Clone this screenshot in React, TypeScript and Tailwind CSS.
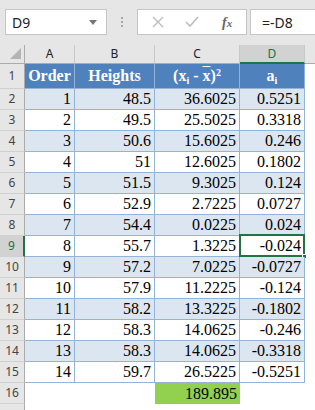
import React from 'react';

const rows: [string, string, string, string][] = [
  ['1', '48.5', '36.6025', '0.5251'],
  ['2', '49.5', '25.5025', '0.3318'],
  ['3', '50.6', '15.6025', '0.246'],
  ['4', '51', '12.6025', '0.1802'],
  ['5', '51.5', '9.3025', '0.124'],
  ['6', '52.9', '2.7225', '0.0727'],
  ['7', '54.4', '0.0225', '0.024'],
  ['8', '55.7', '1.3225', '-0.024'],
  ['9', '57.2', '7.0225', '-0.0727'],
  ['10', '57.9', '11.2225', '-0.124'],
  ['11', '58.2', '13.3225', '-0.1802'],
  ['12', '58.3', '14.0625', '-0.246'],
  ['13', '58.3', '14.0625', '-0.3318'],
  ['14', '59.7', '26.5225', '-0.5251'],
];

const sans = "font-['Noto_Sans',sans-serif]";
const serif = "font-['Liberation_Serif',serif]";

const RowHead = ({ n, active }: { n?: number; active?: boolean }) => (
  <div
    className={`flex items-center justify-center text-[12px] border-b border-[#d0d0d0] ${sans} ${
      active
        ? 'bg-[#d2d2d2] text-[#217346] border-r-2 border-r-[#217346]'
        : 'bg-[#e6e6e6] text-[#444] border-r border-r-[#ababab]'
    }`}
  >
    {n}
  </div>
);

const App: React.FC = () => {
  return (
    <div className="w-[315px] h-[410px] overflow-hidden bg-[#e6e6e6] flex flex-col">
      {/* formula bar */}
      <div className="h-[45px] shrink-0 flex items-start pt-[9px] pl-[5px]">
        <div className={`w-[102px] h-[26px] bg-white border border-[#c6c6c6] flex items-center justify-between pl-[6px] pr-[9px] text-[14px] text-[#222] ${sans}`}>
          <span>D9</span>
          <svg width="8" height="5" viewBox="0 0 8 5">
            <path d="M0 0h8L4 5z" fill="#777" />
          </svg>
        </div>
        <div className="w-[30px] h-[26px] flex flex-col items-center justify-center gap-[2px]">
          <span className="w-[2px] h-[2px] bg-[#a6a6a6]" />
          <span className="w-[2px] h-[2px] bg-[#a6a6a6]" />
          <span className="w-[2px] h-[2px] bg-[#a6a6a6]" />
        </div>
        <div className="w-[110px] h-[26px] bg-white border border-[#c6c6c6] flex items-center">
          <svg className="ml-[14px]" width="12" height="12" viewBox="0 0 12 12">
            <path d="M1 1l10 10M11 1L1 11" stroke="#bdbdbd" strokeWidth="1.4" />
          </svg>
          <svg className="ml-[21px]" width="14" height="12" viewBox="0 0 14 12">
            <path d="M1 6l4 4 8-9" stroke="#bdbdbd" strokeWidth="1.6" fill="none" />
          </svg>
          <span className={`ml-[23px] text-[14px] italic font-bold text-[#666] ${serif}`}>
            f<span className="text-[11px]">x</span>
          </span>
        </div>
        <div className={`ml-[3px] flex-1 h-[26px] bg-white border border-[#c6c6c6] border-r-0 flex items-center pl-[11px] text-[14px] text-[#222] ${sans}`}>
          =-D8
        </div>
      </div>

      {/* grid */}
      <div className="grid grid-cols-[25px_50px_80px_85px_65px_1fr] grid-rows-[19px_25px_repeat(16,21px)] bg-white">
        {/* column headers */}
        <div className="relative bg-[#e6e6e6] border-r border-b border-[#ababab]">
          <svg className="absolute right-[3px] bottom-[4px]" width="11" height="11" viewBox="0 0 11 11">
            <path d="M11 0V11H0z" fill="#b4b4b4" />
          </svg>
        </div>
        {['A', 'B', 'C'].map((c) => (
          <div
            key={c}
            className={`bg-[#e6e6e6] border-r border-r-[#c8c8c8] border-b border-b-[#ababab] flex items-center justify-center text-[12px] text-[#222] ${sans}`}
          >
            {c}
          </div>
        ))}
        <div className={`bg-[#d2d2d2] border-r border-r-[#c8c8c8] border-b-2 border-b-[#217346] flex items-center justify-center text-[12px] text-[#217346] ${sans}`}>
          D
        </div>
        <div className="bg-[#e6e6e6] border-b border-b-[#ababab]" />

        {/* row 1 header */}
        <RowHead n={1} />
        {['Order', 'Heights'].map((h) => (
          <div
            key={h}
            className={`bg-[#4f81bd] border-r border-b border-[#95b3d7] flex items-center justify-center text-white font-bold text-[16px] ${serif}`}
          >
            {h}
          </div>
        ))}
        <div className={`bg-[#4f81bd] border-r border-b border-[#95b3d7] flex items-center justify-center text-white font-bold text-[16px] ${serif}`}>
          <span>
            (x<sub className="text-[10px]">i</sub> - <span className="overline">x</span>)<sup className="text-[10px]">2</sup>
          </span>
        </div>
        <div className={`bg-[#4f81bd] border-r border-b border-[#95b3d7] flex items-center justify-center text-white font-bold text-[16px] ${serif}`}>
          <span>
            a<sub className="text-[10px]">i</sub>
          </span>
        </div>
        <div />

        {rows.map((r, i) => {
          const n = i + 2;
          const bg = n % 2 === 0 ? 'bg-[#dce6f1]' : 'bg-white';
          const active = n === 9;
          return (
            <React.Fragment key={n}>
              <RowHead n={n} active={active} />
              {r.map((v, j) => (
                <div
                  key={j}
                  className={`relative ${bg} border-r border-b border-[#95b3d7] flex items-center justify-end pr-[3px] text-[16px] text-black ${serif}`}
                >
                  {v}
                  {active && j === 3 && (
                    <div className="absolute -left-px -top-[2px] -right-px -bottom-px border-2 border-[#217346]">
                      <div className="absolute -right-[4px] -bottom-[4px] w-[5px] h-[5px] bg-[#217346] border border-white" />
                    </div>
                  )}
                </div>
              ))}
              <div />
            </React.Fragment>
          );
        })}

        {/* row 16 */}
        <RowHead n={16} />
        <div />
        <div />
        <div className={`bg-[#92d050] flex items-center justify-end pr-[3px] text-[16px] text-black ${serif}`}>
          189.895
        </div>
        <div />
        <div />

        {/* row 17, cut by the window */}
        <RowHead />
        <div />
        <div />
        <div />
        <div />
        <div />
      </div>
    </div>
  );
};

export default App;
